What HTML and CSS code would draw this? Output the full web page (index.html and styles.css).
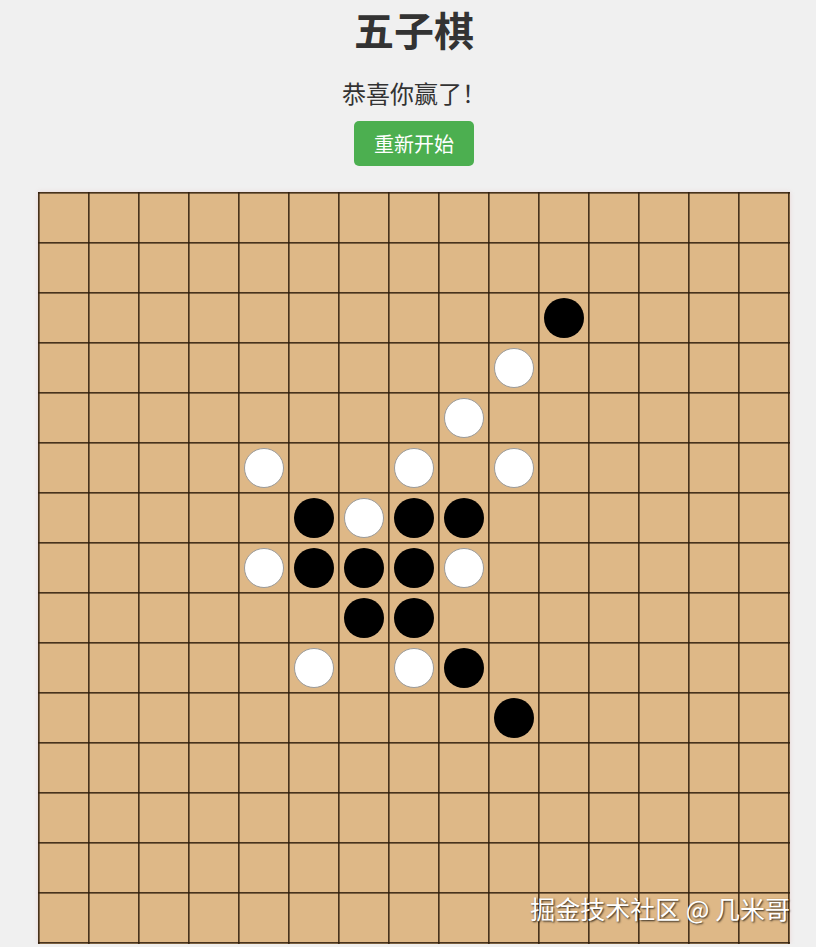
FILE: index.html
```html
<!DOCTYPE html>
<html lang="zh">
<head>
<meta charset="utf-8">
<title>五子棋</title>
<link rel="stylesheet" href="styles.css">
</head>
<body>
<main class="game">
  <h1 class="title">五子棋</h1>
  <p class="status">恭喜你赢了！</p>
  <button class="restart">重新开始</button>
  <div class="board">
    <span class="stone black" style="grid-column:11;grid-row:3"></span>
    <span class="stone white" style="grid-column:10;grid-row:4"></span>
    <span class="stone white" style="grid-column:9;grid-row:5"></span>
    <span class="stone white" style="grid-column:5;grid-row:6"></span>
    <span class="stone white" style="grid-column:8;grid-row:6"></span>
    <span class="stone white" style="grid-column:10;grid-row:6"></span>
    <span class="stone black" style="grid-column:6;grid-row:7"></span>
    <span class="stone white" style="grid-column:7;grid-row:7"></span>
    <span class="stone black" style="grid-column:8;grid-row:7"></span>
    <span class="stone black" style="grid-column:9;grid-row:7"></span>
    <span class="stone white" style="grid-column:5;grid-row:8"></span>
    <span class="stone black" style="grid-column:6;grid-row:8"></span>
    <span class="stone black" style="grid-column:7;grid-row:8"></span>
    <span class="stone black" style="grid-column:8;grid-row:8"></span>
    <span class="stone white" style="grid-column:9;grid-row:8"></span>
    <span class="stone black" style="grid-column:7;grid-row:9"></span>
    <span class="stone black" style="grid-column:8;grid-row:9"></span>
    <span class="stone white" style="grid-column:6;grid-row:10"></span>
    <span class="stone white" style="grid-column:8;grid-row:10"></span>
    <span class="stone black" style="grid-column:9;grid-row:10"></span>
    <span class="stone black" style="grid-column:10;grid-row:11"></span>
    <div class="watermark">掘金技术社区 @ 几米哥</div>
  </div>
</main>
</body>
</html>
```
FILE: styles.css
```css
html, body {
  margin: 0;
  padding: 0;
  background: #f0f0f0;
  overflow: hidden;
}
body {
  padding-left: 12px;
  font-family: "Microsoft YaHei", "Noto Sans CJK SC", "Noto Sans", sans-serif;
  color: #333;
}
.game {
  display: flex;
  flex-direction: column;
  align-items: center;
}
.title {
  margin: 4px 0 0;
  font-size: 40px;
  line-height: 50px;
  font-weight: 700;
  color: #333;
}
.status {
  margin: 23px 0 0;
  font-size: 24px;
  line-height: 32px;
  color: #333;
}
.restart {
  margin-top: 12px;
  width: 120px;
  height: 45px;
  border: none;
  border-radius: 5px;
  background: #4caf50;
  color: #fff;
  font-family: inherit;
  font-size: 20px;
  padding: 0;
}
.board {
  position: relative;
  margin-top: 26px;
  width: 752px;
  height: 752px;
  display: grid;
  grid-template-columns: repeat(15, 50px);
  grid-template-rows: repeat(15, 50px);
  padding: 1px;
  box-sizing: border-box;
  background-color: #deb887;
  background-image:
    linear-gradient(to right, rgba(45, 28, 10, 0.85) 0, rgba(45, 28, 10, 0.85) 1px, rgba(45, 28, 10, 0.55) 1px, rgba(45, 28, 10, 0.55) 2px, transparent 2px),
    linear-gradient(to bottom, rgba(45, 28, 10, 0.85) 0, rgba(45, 28, 10, 0.85) 1px, rgba(45, 28, 10, 0.55) 1px, rgba(45, 28, 10, 0.55) 2px, transparent 2px);
  background-size: 50px 50px;
  background-position: 0 0;
  box-shadow: 0 0 4px rgba(220, 160, 160, 0.35);
}
.stone {
  align-self: center;
  justify-self: center;
  width: 40px;
  height: 40px;
  border-radius: 50%;
  box-sizing: border-box;
}
.stone.black {
  background: #000;
}
.stone.white {
  background: #fff;
  border: 1.5px solid #9a9a9a;
}
.watermark {
  position: absolute;
  right: 0;
  bottom: 21px;
  font-size: 25px;
  line-height: 30px;
  color: #fff;
  text-shadow: 1px 1px 2px rgba(0, 0, 0, 0.8);
  white-space: nowrap;
}
```
